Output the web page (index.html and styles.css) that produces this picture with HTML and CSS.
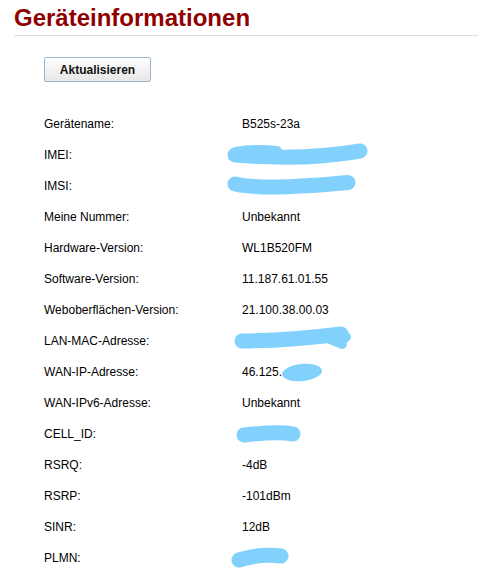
FILE: index.html
```html
<!DOCTYPE html>
<html lang="de">
<head>
<meta charset="utf-8">
<title>Geräteinformationen</title>
<link rel="stylesheet" href="styles.css">
</head>
<body>
<div class="page">
  <h1 class="title">Geräteinformationen</h1>
  <div class="content">
    <button class="btn" type="button">Aktualisieren</button>
    <div class="info">
      <div class="label">Gerätename:</div><div class="value">B525s-23a</div>
      <div class="label">IMEI:</div>
      <div class="value"><svg class="mask" width="160" height="31" viewBox="0 0 160 31"><path d="M13,15 C48,18 92,19 138,11" /><path d="M14,12 C30,9 45,10 55,11" class="thin"/></svg></div>
      <div class="label">IMSI:</div>
      <div class="value"><svg class="mask" width="160" height="31" viewBox="0 0 160 31"><path d="M13,13 C40,19 90,15 126,11.5" /></svg></div>
      <div class="label">Meine Nummer:</div><div class="value">Unbekannt</div>
      <div class="label">Hardware-Version:</div><div class="value">WL1B520FM</div>
      <div class="label">Software-Version:</div><div class="value">11.187.61.01.55</div>
      <div class="label">Weboberflächen-Version:</div><div class="value">21.100.38.00.03</div>
      <div class="label">LAN-MAC-Adresse:</div>
      <div class="value"><svg class="mask" width="160" height="31" viewBox="0 0 160 31"><path d="M20,15 C60,15 95,11 119,8" /><path d="M108,13 L120,18" class="thin"/><path d="M118,9 L124,11" class="thin"/></svg></div>
      <div class="label">WAN-IP-Adresse:</div>
      <div class="value">46.125.<svg class="blob" width="44" height="31" viewBox="0 0 44 31"><ellipse cx="20" cy="15.5" rx="20" ry="8.5" transform="rotate(-6 20 15.5)"/></svg></div>
      <div class="label">WAN-IPv6-Adresse:</div><div class="value">Unbekannt</div>
      <div class="label">CELL_ID:</div>
      <div class="value"><svg class="mask" width="160" height="31" viewBox="0 0 160 31"><path d="M22,16 C40,14 60,13 71,15" /></svg></div>
      <div class="label">RSRQ:</div><div class="value">-4dB</div>
      <div class="label">RSRP:</div><div class="value">-101dBm</div>
      <div class="label">SINR:</div><div class="value">12dB</div>
      <div class="label">PLMN:</div>
      <div class="value"><svg class="mask" width="160" height="31" viewBox="0 0 160 31"><path d="M17,17 C30,13 45,11 59,13" /></svg></div>
    </div>
  </div>
</div>
</body>
</html>
```

FILE: styles.css
```css
html, body {
  margin: 0;
  padding: 0;
  background: #ffffff;
}

body {
  font-family: "Liberation Sans", Arial, sans-serif;
  color: #000;
  font-size: 12px;
}

.page {
  padding-left: 14px;
}

.title {
  margin: 0;
  padding-top: 4px;
  padding-bottom: 3px;
  font-size: 24px;
  line-height: 28px;
  font-weight: bold;
  color: #8f0000;
  border-bottom: 1px solid #dcdcdc;
}

.content {
  padding-left: 30px;
  padding-top: 21px;
}

.btn {
  display: block;
  width: 107px;
  height: 25px;
  margin: 0;
  padding: 0;
  font-family: "Liberation Sans", Arial, sans-serif;
  font-size: 12px;
  font-weight: bold;
  color: #111;
  background: linear-gradient(#ffffff, #e6e6e6);
  border: 1px solid #9bb7cf;
  border-radius: 2px;
}

.info {
  display: grid;
  grid-template-columns: 198px 1fr;
  grid-auto-rows: 31px;
  margin-top: 27px;
}

.label, .value {
  display: flex;
  align-items: center;
  line-height: 31px;
  white-space: nowrap;
}

.mask {
  margin-left: -20px;
  overflow: visible;
}

.mask path {
  fill: none;
  stroke: #82d1fc;
  stroke-width: 15;
  stroke-linecap: round;
  stroke-linejoin: round;
}

.mask path.thin {
  stroke-width: 10;
}

.blob {
  overflow: visible;
}

.blob ellipse {
  fill: #82d1fc;
}
```
